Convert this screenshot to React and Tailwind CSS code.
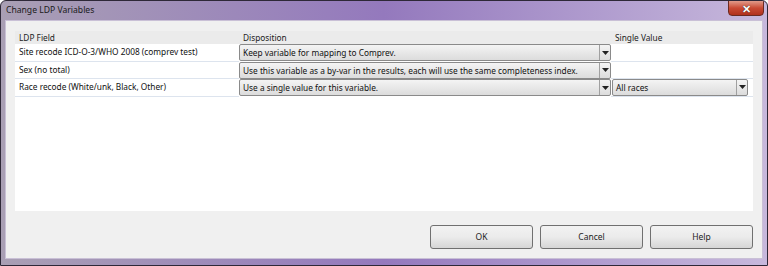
import React from 'react';

const rows = [
  { field: 'Site recode ICD-O-3/WHO 2008 (comprev test)', disp: 'Keep variable for mapping to Comprev.', single: null },
  { field: 'Sex (no total)', disp: 'Use this variable as a by-var in the results, each will use the same completeness index.', single: null },
  { field: 'Race recode (White/unk, Black, Other)', disp: 'Use a single value for this variable.', single: 'All races' },
];

const Arrow = () => (
  <svg width="7" height="4" viewBox="0 0 7 4">
    <path d="M0 0h7L3.5 4z" fill="#222" />
  </svg>
);

const Combo = ({ text, className }) => (
  <div className={`flex h-[17px] items-stretch rounded-[2px] border border-[#8a8a8a] bg-gradient-to-b from-[#f4f4f4] to-[#dcdcdc] ${className}`}>
    <div className="flex-1 truncate pl-[3px] leading-[15px] text-[#111]">{text}</div>
    <div className="flex w-[11px] items-center justify-center border-l border-[#a0a0a0]">
      <Arrow />
    </div>
  </div>
);

const Button = ({ children }) => (
  <button className="h-[24px] w-[103px] rounded-[3px] border border-[#707070] bg-gradient-to-b from-[#f2f2f2] via-[#ebebeb] to-[#d6d6d6] text-[8.5px] text-[#222]">
    {children}
  </button>
);

export default function App() {
  return (
    <div
      className="flex h-[266px] w-[768px] flex-col overflow-hidden rounded-t-[6px] border border-[#2e2838] bg-gradient-to-r from-[#a99fb4] via-[#9479bd] to-[#c7b8dc] text-[8.3px]"
      style={{ fontFamily: '"Noto Sans", "Open Sans", sans-serif' }}
    >
      <div className="relative flex h-[19px] shrink-0 items-center pl-[5px] text-[8.6px] text-[#1a1a1a]">
        Change LDP Variables
        <div className="absolute right-[3px] top-[-1px] flex h-[16px] w-[36px] items-center justify-center rounded-b-[4px] border border-[#6b2a22] bg-gradient-to-b from-[#e09a8a] via-[#c94a34] to-[#b0301d]">
          <span className="text-[11px] font-bold leading-none text-white [text-shadow:0_0_1px_#000]">✕</span>
        </div>
      </div>
      <div className="mx-[4px] mb-[6px] flex flex-1 flex-col border border-[#c9c0d6] bg-[#f0f0f0] px-[9px] pt-[10px]">
        <div className="h-[180px] bg-white">
          <div className="flex h-[13px] bg-[#ebebeb] leading-[13px] text-[#222]">
            <div className="w-[224px] pl-[4px]">LDP Field</div>
            <div className="w-[372px] pl-[4px]">Disposition</div>
            <div className="flex-1 pl-[4px]">Single Value</div>
          </div>
          {rows.map((r) => (
            <div key={r.field} className="flex h-[17.5px] items-center">
              <div className="flex h-full w-[224px] items-center border-b border-[#dde4ee] pl-[4px] text-[#111]">{r.field}</div>
              <Combo text={r.disp} className="w-[372px]" />
              <div className="flex h-full flex-1 items-center border-b border-[#dde4ee] pl-[1px]">
                {r.single && <Combo text={r.single} className="w-[136px]" />}
              </div>
            </div>
          ))}
        </div>
        <div className="mt-[14px] flex justify-end gap-[7px]">
          <Button>OK</Button>
          <Button>Cancel</Button>
          <Button>Help</Button>
        </div>
      </div>
    </div>
  );
}
